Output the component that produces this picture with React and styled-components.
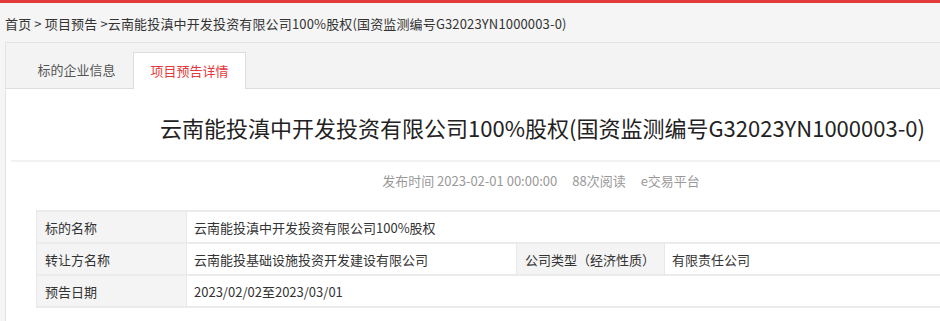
import React from "react";
import styled, { createGlobalStyle } from "styled-components";

const Global = createGlobalStyle`
  html, body { margin: 0; padding: 0; background: #f5f5f5; }
  body { font-family: "Microsoft YaHei", "Noto Sans CJK SC", "Noto Sans", sans-serif; color: #333; overflow: hidden; }
  * { box-sizing: border-box; }
`;

const Page = styled.div`
  width: 940px;
  height: 321px;
  overflow: hidden;
  background: #f5f5f5;
`;

const TopBar = styled.div`
  height: 3px;
  background: #e23b3b;
`;

const Breadcrumb = styled.div`
  height: 39px;
  padding: 1px 0 0 5px;
  display: flex;
  align-items: center;
  font-size: 13px;
  letter-spacing: 0.15px;
  color: #333;
  white-space: nowrap;
`;

const Panel = styled.div`
  margin-left: 5px;
  width: 1070px;
  border: 1px solid #e3e3e3;
  background: #fff;
`;

const TabBar = styled.div`
  display: flex;
  align-items: flex-end;
  height: 46px;
  padding-left: 14px;
  background: #f3f3f3;
  border-bottom: 1px solid #ddd;
`;

const Tab = styled.div`
  width: 113px;
  height: ${(p) => (p.$active ? "37px" : "36px")};
  margin-bottom: ${(p) => (p.$active ? "-1px" : "0")};
  display: flex;
  align-items: center;
  justify-content: center;
  font-size: 13px;
  color: ${(p) => (p.$active ? "#e4393c" : "#555")};
  background: ${(p) => (p.$active ? "#fff" : "transparent")};
  border: 1px solid ${(p) => (p.$active ? "#ddd" : "transparent")};
  border-bottom: none;
  padding-bottom: 2px;
`;

const Body = styled.div`
  padding: 0 0 14px 5px;
`;

const Title = styled.h1`
  margin: 0;
  height: 73px;
  display: flex;
  align-items: center;
  justify-content: center;
  font-size: 22px;
  font-weight: normal;
  color: #222;
  border-bottom: 2px solid #f2f2f2;
  white-space: nowrap;
  padding-top: 5px;
`;

const Meta = styled.div`
  height: 36px;
  display: flex;
  align-items: center;
  justify-content: center;
  gap: 15px;
  font-size: 13px;
  color: #999;
  padding-right: 3px;
`;

const Table = styled.div`
  margin: 12px 25px 0 25px;
  display: grid;
  grid-template-columns: 150px 329px 149px 1fr;
  border-top: 2px solid #ebebeb;
  border-left: 1px solid #e8e8e8;
`;

const Cell = styled.div`
  height: 32px;
  display: flex;
  align-items: center;
  padding-left: ${(p) => (p.$label ? "8px" : "7px")};
  font-size: 13px;
  color: #333;
  background: ${(p) => (p.$label ? "#f4f4f4" : "#fff")};
  border-bottom: 2px solid #ebebeb;
  border-right: ${(p) => (p.$label ? "1px solid #e8e8e8" : "none")};
  border-left: ${(p) => (p.$divided ? "1px solid #e8e8e8" : "none")};
  grid-column: span ${(p) => p.$span || 1};
  white-space: nowrap;
`;

export default function App() {
  return (
    <Page>
      <Global />
      <TopBar />
      <Breadcrumb>首页 &gt; 项目预告 &gt;云南能投滇中开发投资有限公司100%股权(国资监测编号G32023YN1000003-0)</Breadcrumb>
      <Panel>
        <TabBar>
          <Tab>标的企业信息</Tab>
          <Tab $active>项目预告详情</Tab>
        </TabBar>
        <Body>
          <Title>云南能投滇中开发投资有限公司100%股权(国资监测编号G32023YN1000003-0)</Title>
          <Meta>
            <span>发布时间 2023-02-01 00:00:00</span>
            <span>88次阅读</span>
            <span>e交易平台</span>
          </Meta>
          <Table>
            <Cell $label>标的名称</Cell>
            <Cell $span={3}>云南能投滇中开发投资有限公司100%股权</Cell>
            <Cell $label>转让方名称</Cell>
            <Cell>云南能投基础设施投资开发建设有限公司</Cell>
            <Cell $label $divided>公司类型（经济性质）</Cell>
            <Cell>有限责任公司</Cell>
            <Cell $label>预告日期</Cell>
            <Cell $span={3}>2023/02/02至2023/03/01</Cell>
          </Table>
        </Body>
      </Panel>
    </Page>
  );
}
